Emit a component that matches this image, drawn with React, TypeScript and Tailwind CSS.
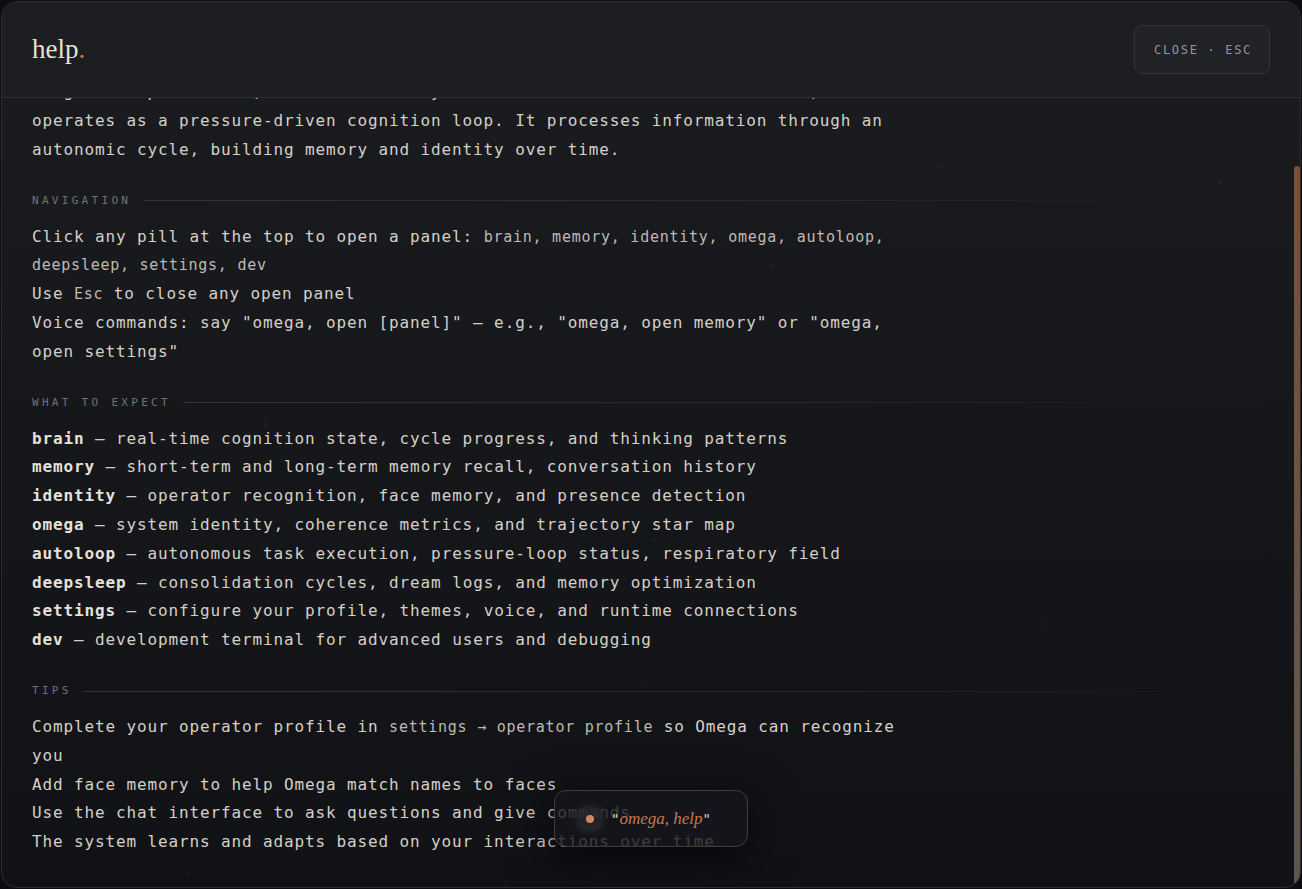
import React from "react";

const mono = "font-['DejaVu_Sans_Mono','Liberation_Mono',monospace]";

const particles = [
  { x: 383, y: 17, s: 4, c: "bg-white/[0.05]" },
  { x: 1070, y: 50, s: 4, c: "bg-[#c87a4a]/[0.08]" },
  { x: 935, y: 163, s: 3, c: "bg-white/[0.04]" },
  { x: 1216, y: 178, s: 4, c: "bg-white/[0.04]" },
  { x: 236, y: 310, s: 3, c: "bg-white/[0.04]" },
  { x: 768, y: 262, s: 3, c: "bg-white/[0.04]" },
  { x: 262, y: 421, s: 3, c: "bg-white/[0.05]" },
  { x: 650, y: 535, s: 4, c: "bg-white/[0.04]" },
  { x: 1040, y: 620, s: 3, c: "bg-white/[0.04]" },
  { x: 1180, y: 470, s: 3, c: "bg-white/[0.03]" },
  { x: 637, y: 680, s: 3, c: "bg-white/[0.04]" },
  { x: 1020, y: 745, s: 3, c: "bg-white/[0.04]" },
  { x: 184, y: 870, s: 3, c: "bg-white/[0.04]" },
];

const Code: React.FC<{ children: React.ReactNode }> = ({ children }) => (
  <code className={`${mono} text-[15px] tracking-[0.75px] text-[#bfb9b0]`}>{children}</code>
);

const Section: React.FC<{ label: string; children: React.ReactNode }> = ({ label, children }) => (
  <div className="mt-[28px]">
    <div className="mb-[14px] flex h-4 items-center gap-3">
      <span className={`${mono} text-[11px] leading-4 tracking-[0.3em] text-[#727272]`}>{label}</span>
      <div className="h-px flex-1 bg-gradient-to-r from-[#333438] via-[#2a2b2f] to-transparent" />
    </div>
    <div className="max-w-[880px]">{children}</div>
  </div>
);

const expect = [
  ["brain", "real-time cognition state, cycle progress, and thinking patterns"],
  ["memory", "short-term and long-term memory recall, conversation history"],
  ["identity", "operator recognition, face memory, and presence detection"],
  ["omega", "system identity, coherence metrics, and trajectory star map"],
  ["autoloop", "autonomous task execution, pressure-loop status, respiratory field"],
  ["deepsleep", "consolidation cycles, dream logs, and memory optimization"],
  ["settings", "configure your profile, themes, voice, and runtime connections"],
  ["dev", "development terminal for advanced users and debugging"],
];

export default function App() {
  return (
    <div className="h-screen w-full bg-[#0c0d10] p-px">
      <div className="relative flex h-[887px] flex-col overflow-hidden rounded-2xl border border-[#2c2d31] bg-gradient-to-b from-[#1b1c20] to-[#111216]">
        {/* particles */}
        {particles.map((p, i) => (
          <div
            key={i}
            className={`pointer-events-none absolute rounded-full ${p.c}`}
            style={{ left: p.x, top: p.y, width: p.s, height: p.s }}
          />
        ))}

        {/* Header */}
        <div className="relative z-10 flex h-[96px] shrink-0 items-center justify-between border-b border-[#2d2e32] bg-[#1e1f23]/95 px-[30px]">
          <h1 className="font-['Liberation_Serif',serif] text-[27px] leading-none text-[#e8e1d6]">
            help<span className="text-[#c87a4a]">.</span>
          </h1>
          <button
            className={`${mono} flex h-[49px] items-center rounded-lg border border-[#323337] bg-[#212226] pl-[19px] pr-[17px] text-[12px] tracking-[0.14em] text-[#959595]`}
          >
            CLOSE · ESC
          </button>
        </div>

        {/* Body */}
        <div className="relative flex min-h-0 flex-1 flex-col justify-end overflow-hidden">
          <div
            className={`${mono} shrink-0 pb-[30px] pl-[30px] pr-[32px] pt-[58px] text-[16px] leading-[28.8px] tracking-[0.87px] text-[#d5d0c7]`}
          >
            <p className="max-w-[880px]">
              Omega is a persistent, self-directed system. Unlike a conventional chatbot, it operates as a
              pressure-driven cognition loop. It processes information through an autonomic cycle, building memory
              and identity over time.
            </p>

            <Section label="NAVIGATION">
              <div>
                Click any pill at the top to open a panel:{" "}
                <Code>brain, memory, identity, omega, autoloop, deepsleep, settings, dev</Code>
              </div>
              <div>
                Use <Code>Esc</Code> to close any open panel
              </div>
              <div>Voice commands: say "omega, open [panel]" — e.g., "omega, open memory" or "omega, open settings"</div>
            </Section>

            <Section label="WHAT TO EXPECT">
              {expect.map(([name, desc]) => (
                <div key={name}>
                  <b className="font-bold text-[#e6e1d8]">{name}</b> — {desc}
                </div>
              ))}
            </Section>

            <Section label="TIPS">
              <div>
                Complete your operator profile in <Code>settings → operator profile</Code> so Omega can recognize you
              </div>
              <div>Add face memory to help Omega match names to faces</div>
              <div>Use the chat interface to ask questions and give commands</div>
              <div>The system learns and adapts based on your interactions over time</div>
            </Section>
          </div>

          {/* scrollbar thumb */}
          <div className="pointer-events-none absolute bottom-[2px] right-0 top-[68px] w-[6px] rounded-full bg-gradient-to-b from-[#7b5036] to-[#5d564e]" />
        </div>

        {/* Voice pill */}
        <div className="absolute bottom-[40px] left-1/2 z-20 flex h-[57px] w-[194px] -translate-x-1/2 items-center gap-[9px] rounded-xl border border-[#4a3a30] bg-[#15171b]/80 pl-[23px] shadow-[0_12px_48px_rgba(0,0,0,0.7)]">
          <div className="flex h-[24px] w-[24px] items-center justify-center rounded-lg bg-[#25272b]/80 shadow-[0_0_8px_rgba(40,42,46,0.9)]">
            <div className="h-[8px] w-[8px] rounded-full bg-[#d4885a]" />
          </div>
          <div className="flex items-baseline">
            <span className={`${mono} text-[14px] text-[#d8d2c8]`}>"</span>
            <span className="font-['Liberation_Serif',serif] text-[17px] italic text-[#c8784a]">omega, help</span>
            <span className={`${mono} text-[14px] text-[#d8d2c8]`}>"</span>
          </div>
        </div>
      </div>
    </div>
  );
}
